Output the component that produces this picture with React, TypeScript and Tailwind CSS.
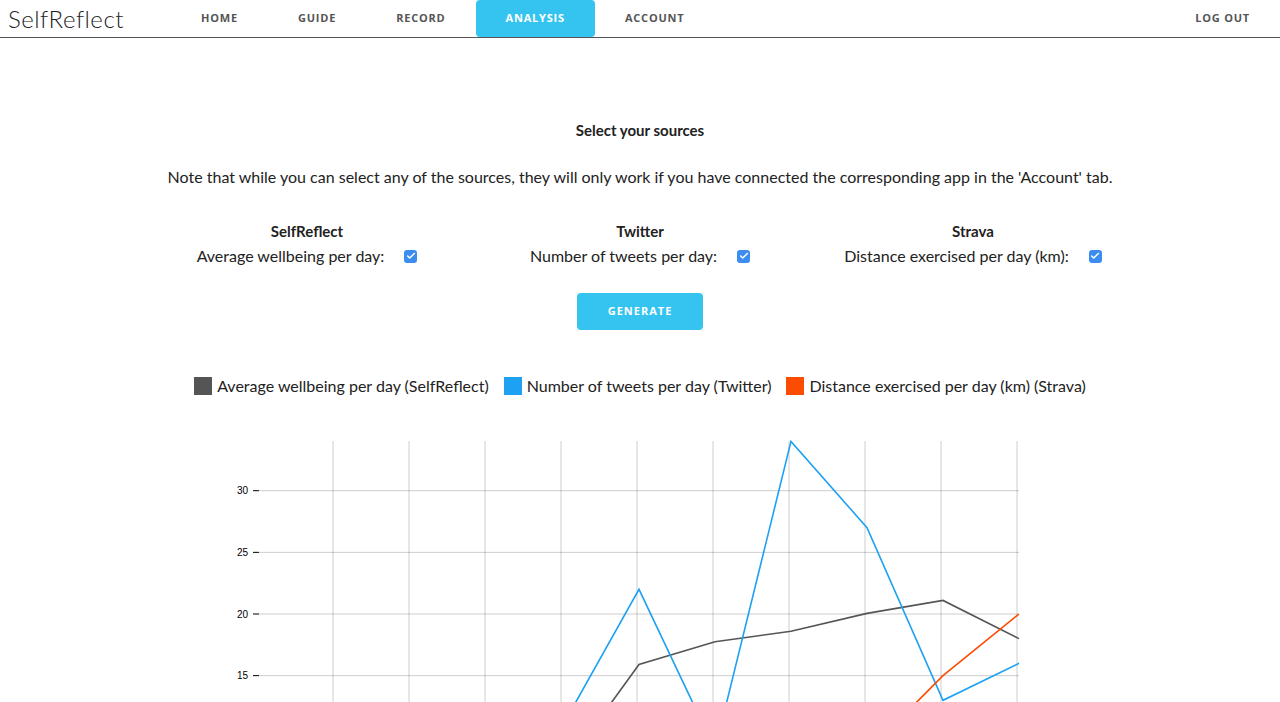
import { Check } from "lucide-react";

const navItems = ["Home", "Guide", "Record", "Analysis", "Account"];

const sources = [
  { name: "SelfReflect", label: "Average wellbeing per day:" },
  { name: "Twitter", label: "Number of tweets per day:" },
  { name: "Strava", label: "Distance exercised per day (km):" },
];

const legend = [
  { color: "bg-[#555555]", label: "Average wellbeing per day (SelfReflect)" },
  { color: "bg-[#1da1f2]", label: "Number of tweets per day (Twitter)" },
  { color: "bg-[#fc4c02]", label: "Distance exercised per day (km) (Strava)" },
];

const series = [
  { color: "#555555", values: [3, 4, 5, 7.4, 15.9, 17.75, 18.6, 20.05, 21.1, 18] },
  { color: "#1da1f2", values: [5, 8, 6, 11, 22, 9, 34, 27, 13, 16] },
  { color: "#fc4c02", values: [0, 0, 0, 0, 0, 0, 0, 8.8, 15, 20] },
];

const px = (i: number) => 115 + 76 * i;
const py = (v: number) => 430.6 - 12.33 * v;

function Chart() {
  const grid = [0, 5, 10, 15, 20, 25, 30];
  const labelled = [15, 20, 25, 30];
  return (
    <svg width="840" height="440" className="block">
      {Array.from({ length: 10 }).map((_, i) => (
        <line key={i} x1={113 + 76 * i} x2={113 + 76 * i} y1={11} y2={440} stroke="#000" strokeOpacity={0.2} />
      ))}
      {grid.map((t) => (
        <line key={t} x1={39} x2={799} y1={py(t)} y2={py(t)} stroke="#000" strokeOpacity={0.2} />
      ))}
      {labelled.map((t) => (
        <g key={t}>
          <line x1={33} x2={39} y1={py(t)} y2={py(t)} stroke="#000" />
          <text x={28} y={py(t) + 3.5} textAnchor="end" fontSize="10" fontFamily="'Liberation Sans', Arial, sans-serif" fill="#000">
            {t}
          </text>
        </g>
      ))}
      {series.map((s) => (
        <polyline
          key={s.color}
          points={s.values.map((v, i) => `${px(i)},${py(v)}`).join(" ")}
          fill="none"
          stroke={s.color}
          strokeWidth={1.6}
        />
      ))}
    </svg>
  );
}

function App() {
  return (
    <div className="min-h-screen bg-white text-[#222] font-['Lato',sans-serif]">
      <header className="flex items-stretch h-[38px] border-b border-[#555]">
        <div className="w-[171px] pl-2 flex items-center">
          <span className="text-[24px] font-light tracking-[0.5px] text-[#222]">SelfReflect</span>
        </div>
        <nav className="flex">
          {navItems.map((item) => (
            <a
              key={item}
              className={`px-[30px] flex items-center text-[11px] font-bold uppercase tracking-[0.8px] font-['Open_Sans',sans-serif] cursor-pointer ${
                item === "Analysis" ? "bg-[#35c4f0] text-white rounded-[4px]" : "text-[#555]"
              }`}
            >
              {item}
            </a>
          ))}
        </nav>
        <a className="ml-auto px-[30px] flex items-center text-[11px] font-bold uppercase tracking-[0.8px] font-['Open_Sans',sans-serif] text-[#555]">
          Log out
        </a>
      </header>

      <main className="flex flex-col items-center">
        <h2 className="mt-[82px] text-[15px] font-bold leading-[20px]">Select your sources</h2>
        <p className="mt-[27px] text-[16px] leading-[20px]">
          Note that while you can select any of the sources, they will only work if you have connected the corresponding app in the 'Account' tab.
        </p>
        <div className="mt-[34px] grid grid-cols-3 w-[999px]">
          {sources.map((s) => (
            <div key={s.name} className="flex flex-col items-center">
              <h3 className="text-[15px] font-bold leading-[20px]">{s.name}</h3>
              <label className="mt-[5px] flex items-center gap-[20px] text-[16px] leading-[20px]">
                {s.label}
                <span className="w-[13px] h-[13px] rounded-[3px] bg-[#3b8ef0] flex items-center justify-center">
                  <Check size={10} strokeWidth={3.5} color="#fff" />
                </span>
              </label>
            </div>
          ))}
        </div>
        <button className="mt-[27px] w-[126px] h-[37px] rounded-[4px] bg-[#35c4f0] text-white text-[11px] font-bold uppercase tracking-[1px] font-['Open_Sans',sans-serif]">
          Generate
        </button>
        <div className="mt-[46px] flex items-center gap-[15px] text-[16px] leading-[20px]">
          {legend.map((l) => (
            <div key={l.label} className="flex items-center gap-[5px]">
              <span className={`w-[18px] h-[18px] ${l.color}`} />
              <span>{l.label}</span>
            </div>
          ))}
        </div>
        <div className="mt-[34px]">
          <Chart />
        </div>
      </main>
    </div>
  );
}

export default App;
